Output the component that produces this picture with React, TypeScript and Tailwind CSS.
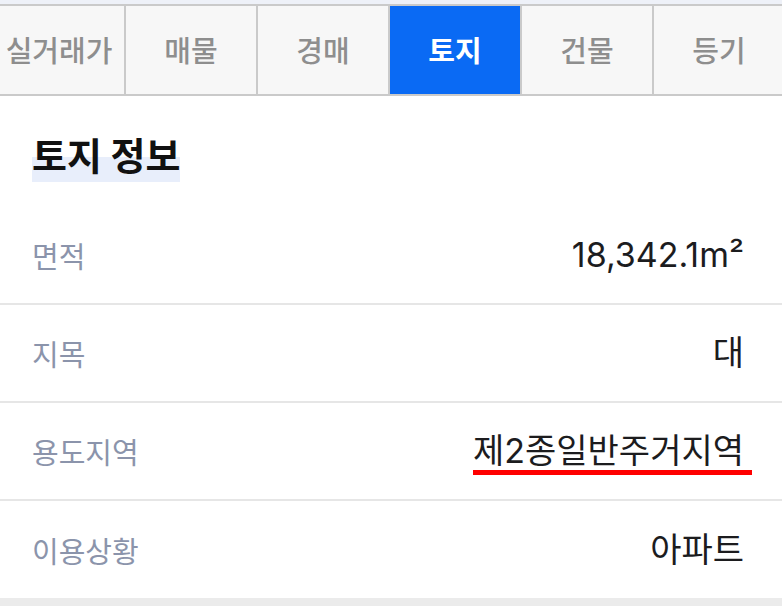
import React from "react";

const tabs = ["실거래가", "매물", "경매", "토지", "건물", "등기"];

const rows = [
  { label: "면적", value: "18,342.1m²" },
  { label: "지목", value: "대" },
  { label: "용도지역", value: "제2종일반주거지역", mark: true },
  { label: "이용상황", value: "아파트" },
];

export default function App() {
  return (
    <div className="min-h-screen bg-[#ebebeb] font-['Noto_Sans_CJK_KR',sans-serif]">
      <div className="h-[4px] bg-[#eef1f8]" />

      {/* tabs */}
      <div className="overflow-hidden border-y-2 border-[#cacaca] bg-[#f7f7f7]">
        <div className="flex ml-[-6px]">
          {tabs.map((t) => {
            const active = t === "토지";
            return (
              <div
                key={t}
                className={
                  active
                    ? "w-[132px] h-[88px] shrink-0 flex items-center justify-center border-r-2 border-[#cacaca] bg-[#0a6af4] text-white font-bold text-[29px]"
                    : "w-[132px] h-[88px] shrink-0 flex items-center justify-center border-r-2 border-[#cacaca] text-[#8e8e8e] font-medium text-[29px]"
                }
              >
                {t}
              </div>
            );
          })}
        </div>
      </div>

      <div className="bg-white">
        <div className="pl-8 pt-[36px] pb-[25px]">
          <h2 className="inline-block text-[38px] leading-[44px] pb-[6px] font-semibold text-[#111111] bg-[linear-gradient(to_bottom,transparent_50%,#e8eefb_50%)]">
            토지 정보
          </h2>
        </div>

        {rows.map((r, i) => (
          <div
            key={r.label}
            className={
              i < rows.length - 1
                ? "flex items-center justify-between pl-8 pr-[30px] h-[98px] border-b-2 border-[#e6e6e6]"
                : "flex items-center justify-between pl-8 pr-[30px] h-[97px]"
            }
          >
            <span className="text-[29px] leading-[38px] text-[#8b94ab]">{r.label}</span>
            <span className="relative pr-2 text-[34px] leading-[38px] text-[#1c1c1e] font-normal font-['Inter','Noto_Sans_CJK_KR',sans-serif]">
              {r.value}
              {r.mark && <span className="absolute left-0 right-0 bottom-[-5px] h-[5px] bg-[#ff0000]" />}
            </span>
          </div>
        ))}
      </div>
    </div>
  );
}
